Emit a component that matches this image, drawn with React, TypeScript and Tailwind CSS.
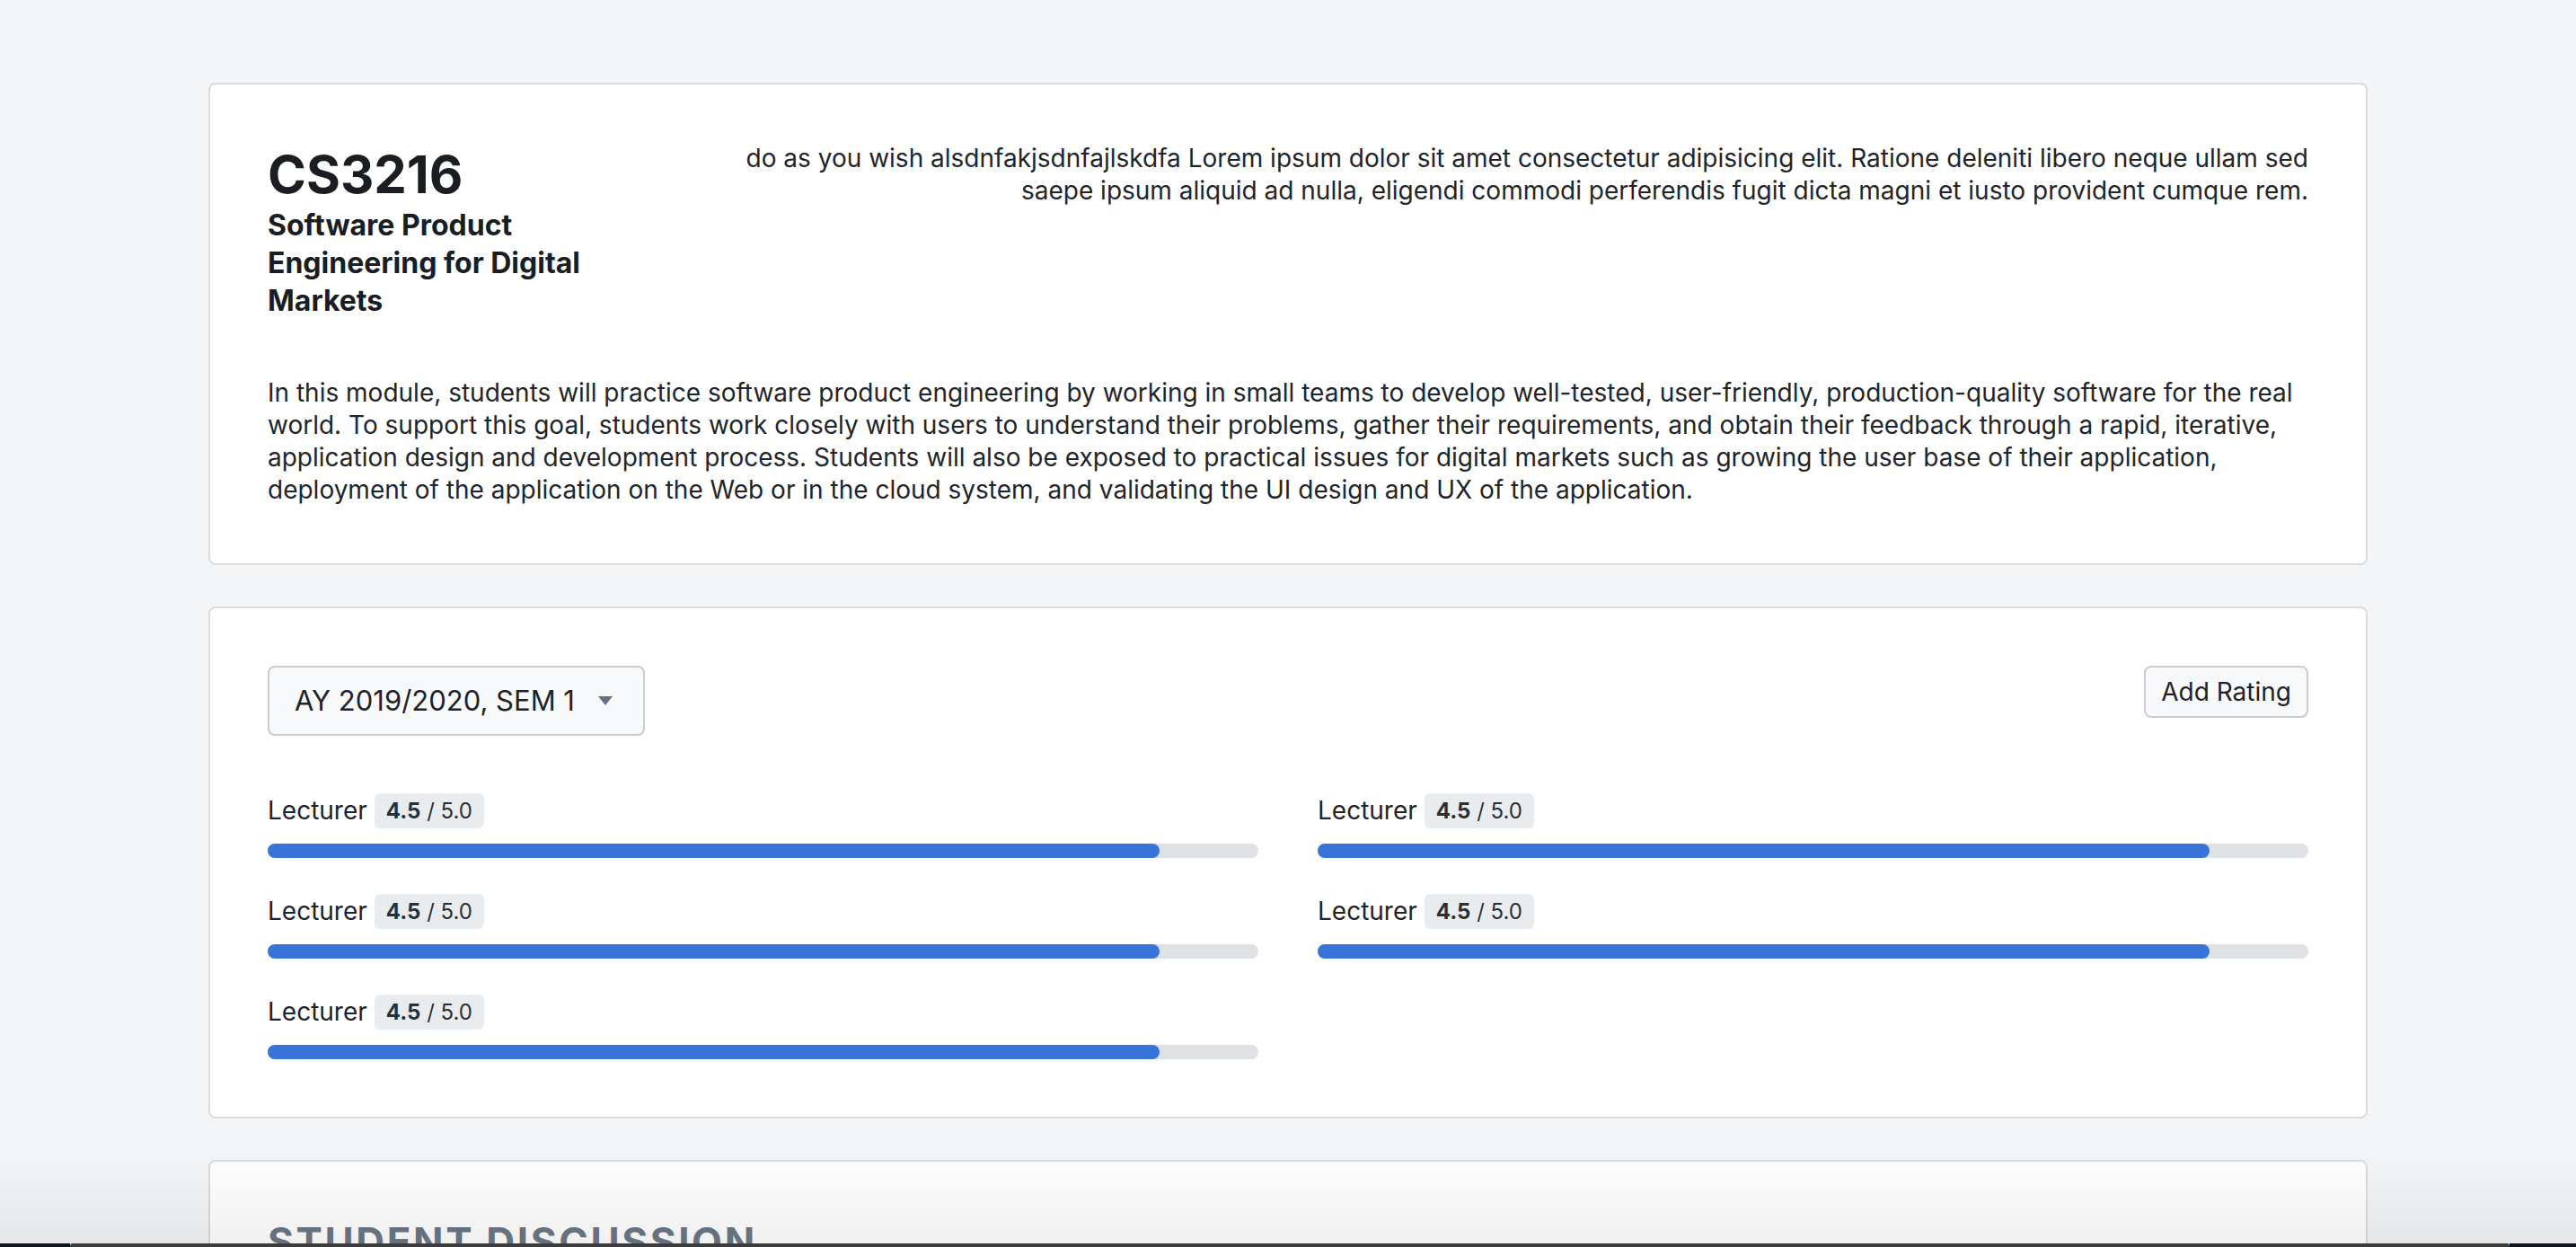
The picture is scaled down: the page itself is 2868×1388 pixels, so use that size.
const ratings = [
  { label: 'Lecturer', score: 4.5, max: 5.0 },
  { label: 'Lecturer', score: 4.5, max: 5.0 },
  { label: 'Lecturer', score: 4.5, max: 5.0 },
  { label: 'Lecturer', score: 4.5, max: 5.0 },
  { label: 'Lecturer', score: 4.5, max: 5.0 },
];

function RatingBar({ label, score, max }: { label: string; score: number; max: number }) {
  return (
    <div className="flex flex-col gap-[17px]">
      <div className="flex items-center gap-[8px]">
        <span className="text-[28px] leading-[39px] text-[#1f2328]">{label}</span>
        <span className="rounded-[6px] bg-[#e9ecef] px-[13px] text-[24px] leading-[39px] text-[#2b2f33]">
          <span className="font-bold">{score.toFixed(1)}</span> / {max.toFixed(1)}
        </span>
      </div>
      <div className="h-[16px] w-full rounded-full bg-[#dee2e6]">
        <div className="h-full rounded-full bg-[#3874d8]" style={{ width: `${(score / max) * 100}%` }} />
      </div>
    </div>
  );
}

export default function App() {
  return (
    <div className="relative min-h-screen bg-[#f4f5f7] pb-[200px] font-['Inter','Noto_Sans',sans-serif] text-[#212529]">
      <div className="mx-auto flex w-[2404px] flex-col gap-[46px] pt-[92px]">
        {/* module header */}
        <div className="rounded-[8px] border-2 border-[#dadde0] bg-white p-[64px]">
          <div className="flex justify-between">
            <div className="w-[440px] shrink-0">
              <h1 className="text-[58px] font-bold leading-[72px] text-[#1a1d21]">CS3216</h1>
              <h2 className="text-[32px] font-bold leading-[42px] text-[#1a1d21]">
                Software Product Engineering for Digital Markets
              </h2>
            </div>
            <p className="w-[1770px] text-right text-[28px] leading-[36px]">
              do as you wish alsdnfakjsdnfajlskdfa Lorem ipsum dolor sit amet consectetur adipisicing elit. Ratione deleniti libero neque ullam sed saepe ipsum aliquid ad nulla, eligendi commodi perferendis fugit dicta magni et iusto provident cumque rem.
            </p>
          </div>
          <p className="mt-[63px] text-[28px] leading-[36px]">
            In this module, students will practice software product engineering by working in small teams to develop well-tested, user-friendly, production-quality software for the real world. To support this goal, students work closely with users to understand their problems, gather their requirements, and obtain their feedback through a rapid, iterative, application design and development process. Students will also be exposed to practical issues for digital markets such as growing the user base of their application, deployment of the application on the Web or in the cloud system, and validating the UI design and UX of the application.
          </p>
        </div>

        {/* ratings */}
        <div className="rounded-[8px] border-2 border-[#dadde0] bg-white p-[64px]">
          <div className="flex items-start justify-between">
            <button className="flex h-[78px] w-[420px] items-center justify-between rounded-[8px] border-2 border-[#c9ccd0] bg-[#f8f9fa] pl-[28px] pr-[34px] text-[31px] text-[#1f2328]">
              <span>AY 2019/2020, SEM 1</span>
              <svg width="16" height="10" viewBox="0 0 16 10">
                <path d="M0 0h16L8 10z" fill="#66717d" />
              </svg>
            </button>
            <button className="h-[58px] rounded-[8px] border-2 border-[#c9ccd0] bg-[#f8f9fa] px-[17px] text-[28px] text-[#1f2328]">
              Add Rating
            </button>
          </div>
          <div className="mt-[64px] grid grid-cols-2 gap-x-[66px] gap-y-[40px]">
            {ratings.map((r, i) => (
              <RatingBar key={i} {...r} />
            ))}
          </div>
        </div>

        {/* discussion */}
        <div className="rounded-[8px] border-2 border-[#dadde0] bg-white p-[64px]">
          <h3 className="text-[44px] font-bold uppercase leading-[50px] tracking-[0.06em] text-[#6c7886]">
            Student Discussion
          </h3>
          <div className="mt-[32px] h-[400px]" />
        </div>
      </div>

      {/* window shadow at the bottom edge */}
      <div className="pointer-events-none fixed inset-x-0 bottom-0 h-[110px] bg-gradient-to-b from-transparent to-black/[0.06]" />
      <div className="pointer-events-none fixed inset-x-0 bottom-0 flex h-[4px]">
        <div className="w-[78px] bg-[#0e1420]" />
        <div className="flex-1 rounded-tl-[3px] rounded-tr-[3px] bg-[#3b3b3b]" />
        <div className="w-[74px] bg-[#0e1420]" />
      </div>
    </div>
  );
}
